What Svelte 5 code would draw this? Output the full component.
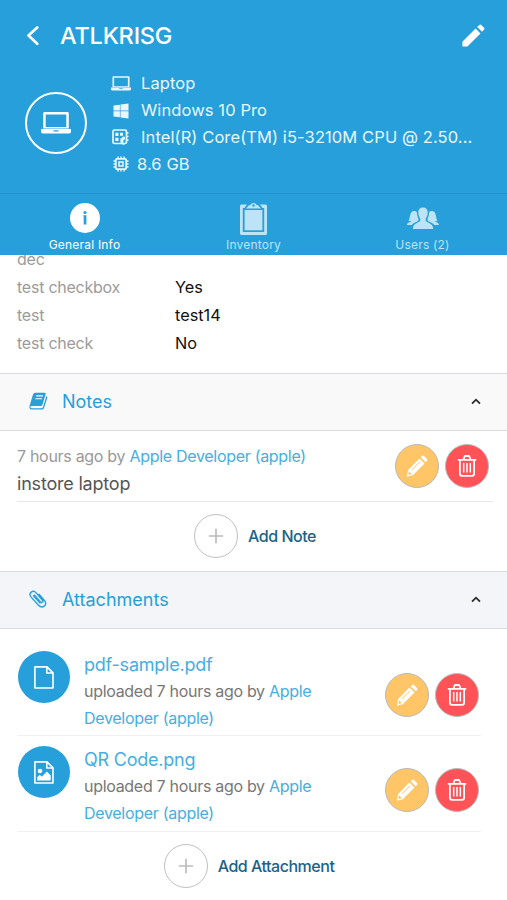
<script lang="ts">
  type Attachment = { name: string; kind: 'file' | 'image' };

  const specs = [
    { icon: 'laptop', text: 'Laptop' },
    { icon: 'windows', text: 'Windows 10 Pro' },
    { icon: 'board', text: 'Intel(R) Core(TM) i5-3210M CPU @ 2.50...' },
    { icon: 'chip', text: '8.6 GB' }
  ];

  const tabs = [
    { id: 'info', label: 'General Info' },
    { id: 'inventory', label: 'Inventory' },
    { id: 'users', label: 'Users (2)' }
  ];

  const fields = [
    { label: 'dec', value: '' },
    { label: 'test checkbox', value: 'Yes' },
    { label: 'test', value: 'test14' },
    { label: 'test check', value: 'No' }
  ];

  const attachments: Attachment[] = [
    { name: 'pdf-sample.pdf', kind: 'file' },
    { name: 'QR Code.png', kind: 'image' }
  ];

  let activeTab = $state('info');
  let notesOpen = $state(true);
  let attachmentsOpen = $state(true);
</script>

{#snippet laptop()}
  <svg class="laptop" viewBox="0 0 30 22" fill="currentColor">
    <path fill-rule="evenodd" d="M3.600 0h22.800q1.400 0 1.400 1.400V16.500H2.200V1.400Q2.200 0 3.600 0zM4.700 2.500v12.500h20.600V2.500z" />
    <path fill-rule="evenodd" d="M0 17h30v2.800q0 1.800-1.800 1.800H1.800Q0 21.600 0 19.800zM12.500 18.200v1.200h5v-1.200z" />
  </svg>
{/snippet}

{#snippet rowActions()}
  <div class="actions">
    <button class="round edit" aria-label="Edit">
      <svg width="22" height="22" viewBox="0 0 22 22">
        <path fill="#fff" d="M14.600 2.300 16 .9q1-.8 2 0l3 3q.9 1 0 2l-1.400 1.400zM13.400 3.400l5.100 5.100L6.800 20.200l-6 1.500 1.300-6.600z" />
        <path d="M5.800 14.900l8-8" stroke="#ffc566" stroke-width="1" />
        <path fill="#ffc566" d="M3 16.300l2.800 2.800-2.600.8-.9-.9z" />
      </svg>
    </button>
    <button class="round remove" aria-label="Delete">
      <svg width="20" height="22" viewBox="0 0 20 22" fill="none" stroke="#fff">
        <path stroke-width="1.800" d="M.8 4.900h18.400M6.500 4.500l1-2.700q.3-.8 1.100-.8h2.800q.8 0 1.100.8l1 2.700M2.900 5v13.600q0 2.300 2.100 2.300h10q2.100 0 2.100-2.300V5" />
        <path stroke-width="1.500" d="M6.700 8v9.500M10 8v9.500M13.300 8v9.500" />
      </svg>
    </button>
  </div>
{/snippet}

{#snippet addButton(label: string)}
  <button class="add">
    <span class="plus">
      <svg width="16" height="16" viewBox="0 0 16 16" stroke="#bcbcbc" stroke-width="1.700">
        <path d="M8 .8v14.400M.8 8h14.400" />
      </svg>
    </span>
    <span>{label}</span>
  </button>
{/snippet}

{#snippet chevron(open: boolean)}
  <svg class="chevron" class:closed={!open} width="10" height="7" viewBox="0 0 10 7" fill="none" stroke="#2b2b2b" stroke-width="1.800">
    <path d="M1 5.700l4-4 4 4" />
  </svg>
{/snippet}

<div class="screen">
  <header>
    <div class="title-bar">
      <button class="plain" aria-label="Back">
        <svg width="13" height="20" viewBox="0 0 13 20" fill="none" stroke="#fff" stroke-width="2.700" stroke-linecap="round" stroke-linejoin="round">
          <path d="M11.200 1.500L2.500 9.500l8.700 8.200" />
        </svg>
      </button>
      <h1>ATLKRISG</h1>
      <button class="plain" aria-label="Edit asset">
        <svg width="23" height="23" viewBox="0 0 23 23" fill="#fff">
          <path d="M.4 22.600v-4.400q0-.5.400-.9L13.600 4.500l4.900 4.900L5.700 22.200q-.4.400-.9.400zM15.200 3l2-2q1-1 2.100 0l2.700 2.700q1 1 0 2.100l-2 2z" />
        </svg>
      </button>
    </div>

    <div class="summary">
      <div class="avatar">{@render laptop()}</div>
      <ul class="specs">
        {#each specs as spec}
          <li class={spec.icon}>
            <span class="spec-icon">
              {#if spec.icon === 'laptop'}
                {@render laptop()}
              {:else if spec.icon === 'windows'}
                <svg width="16" height="16" viewBox="0 0 16 16" fill="currentColor">
                  <path d="M.5 2.600 6.900 1.700v5.900H.5zM7.500 1.600 15.500.4v7.200h-8zM.5 8.300h6.400v6l-6.400-.9zM7.500 8.300h8v7.300l-8-1.200z" />
                </svg>
              {:else if spec.icon === 'board'}
                <svg width="17" height="16" viewBox="0 0 17 16" fill="none" stroke="currentColor">
                  <rect x="1" y="1" width="13.500" height="13.500" rx="1.500" stroke-width="1.700" />
                  <path stroke-width="1.500" d="M14.500 4h2M14.500 7.500h2M14.500 11h2M11.500 14v2" />
                  <path fill="currentColor" stroke="none" d="M3.300 3.700h3.200v3.200H3.300zM8 3.700h3v3H8zM3.300 8.700h3.200v3.200H3.300zM8.400 9.200h1.800V7.800H13v2.700h-1.500v3.200H8.400z" />
                </svg>
              {:else}
                <svg width="16" height="16" viewBox="0 0 16 16" fill="none" stroke="currentColor">
                  <rect x="2.800" y="2.800" width="10.400" height="10.400" rx="1.200" stroke-width="1.800" />
                  <rect x="6" y="6" width="4" height="4" stroke-width="1.500" />
                  <path stroke-width="1.500" d="M5 .5v2M8 .5v2M11 .5v2M5 13.500v2M8 13.500v2M11 13.500v2M.5 5h2M.5 8h2M.5 11h2M13.500 5h2M13.500 8h2M13.500 11h2" />
                </svg>
              {/if}
            </span>
            <span class="spec-text">{spec.text}</span>
          </li>
        {/each}
      </ul>
    </div>

    <nav>
      {#each tabs as tab}
        <button class="tab" class:active={activeTab === tab.id} onclick={() => (activeTab = tab.id)}>
          <span class="tab-icon">
            {#if tab.id === 'info'}
              <svg width="30" height="30" viewBox="0 0 30 30">
                <circle cx="15" cy="15" r="15" fill="currentColor" />
                <circle cx="15" cy="9.500" r="1.600" fill="#269fdb" />
                <path d="M13.300 12.200h3.100V21.500h-2.700v-8h-.4z" fill="#269fdb" />
              </svg>
            {:else if tab.id === 'inventory'}
              <svg width="27" height="32" viewBox="0 0 27 32" fill="currentColor">
                <path d="M1.500 1.500H7L4.500 5H2.800v24h21.400V5h-1.700L20 1.500h5.500q1.500 0 1.500 1.500v27.500q0 1.500-1.500 1.500h-24Q0 32 0 30.500V3q0-1.500 1.500-1.500z" />
                <path fill-rule="evenodd" d="M6 5.600 8.800 2.500q.6-.7 1.500-.7h.4Q11.300 0 13.500 0t2.800 1.800h.4q.9 0 1.500.7L21 5.600zM13.500 1.300a1.200 1.200 0 1 0 0 2.400 1.200 1.200 0 1 0 0-2.400z" />
                <path d="M4.600 7h17.800v20.300H4.600z" />
              </svg>
            {:else}
              <svg width="32" height="23" viewBox="0 0 32 23" fill="currentColor">
                <path d="M16 .5c3.200 0 4.800 2 4.700 5 0 2.700-.8 4.200-1.700 5.500-.5.800-.4 2.500.2 3.200 1.300 1.500 6.300 2.300 6.800 6.200l.1 1.600H5.900l.1-1.600c.5-3.900 5.500-4.700 6.800-6.200.6-.7.7-2.400.2-3.200-.9-1.300-1.700-2.800-1.700-5.500-.1-3 1.500-5 4.700-5z" />
                <path d="M7 4c1.200 0 2.300.4 2.900 1.200.2 3.200.8 5 1.600 6.600q.4 1.500-.8 2.400l-3.600 1.900c-1 .5-1.700 1-2.200 1.900H0c0-3 3.400-2.600 4.300-3.600C3.200 14.400 2 14 1.500 13.500 3.500 12 2.200 4 7 4z" />
                <path d="M25 4c-1.200 0-2.300.4-2.900 1.200-.2 3.200-.8 5-1.600 6.600q-.4 1.500.8 2.400l3.600 1.900c1 .5 1.700 1 2.200 1.900H32c0-3-3.400-2.600-4.300-3.600 1.100 0 2.300-.4 2.800-.9C28.500 12 29.800 4 25 4z" />
              </svg>
            {/if}
          </span>
          <span class="tab-label">{tab.label}</span>
        </button>
      {/each}
    </nav>
  </header>

  <main>
    <dl class="fields">
      {#each fields as field}
        <div class="field">
          <dt>{field.label}</dt>
          <dd>{field.value}</dd>
        </div>
      {/each}
    </dl>

    <button class="section-head notes-head" onclick={() => (notesOpen = !notesOpen)}>
      <svg width="20" height="18" viewBox="0 0 20 18">
        <path fill="#269fdb" d="M6.300.7h9.200q1.500 0 1.100 1.500l-3.200 10.500q-.4 1.300-1.700 1.300H2.400q-1.100 0-1.100 1.100t1.300 1.100h9.900q1.100 0 1.500-1.200l3.400-11q1.200.6.800 1.900l-3.200 10.200q-.5 1.500-2 1.500H2.500Q-.2 17.600.5 14L4 2.500Q4.500.7 6.300.7z" />
        <path d="M7.200 3.900h6.800M6.300 6.800h6.800" stroke="#fff" stroke-width="1.100" />
      </svg>
      <span class="section-title">Notes</span>
      {@render chevron(notesOpen)}
    </button>
    {#if notesOpen}
      <section class="notes">
        <article class="note">
          <div class="note-body">
            <p class="meta">7 hours ago by <a href="#apple">Apple Developer (apple)</a></p>
            <p class="note-text">instore laptop</p>
          </div>
          {@render rowActions()}
        </article>
        {@render addButton('Add Note')}
      </section>
    {/if}

    <button class="section-head attachments-head" onclick={() => (attachmentsOpen = !attachmentsOpen)}>
      <svg width="20" height="18" viewBox="0 0 20 18" fill="none" stroke="#269fdb" stroke-width="1.400" stroke-linecap="round">
        <path d="M5.500 5.200l6 6.700q1.100 1 2 .2t0-1.900L7.300 3.100Q4.800.2 2.300 2.100T2 6.900l7.200 8q3.200 3.300 6 1.200t.4-5.500L10 4.300" />
        <path d="M4.500 5.800 11 13.100" />
      </svg>
      <span class="section-title">Attachments</span>
      {@render chevron(attachmentsOpen)}
    </button>
    {#if attachmentsOpen}
      <section class="attachments">
        {#each attachments as item}
          <article class="attachment">
            <div class="file-icon">
              <svg width="20" height="23" viewBox="0 0 20 23" fill="none" stroke="#fff" stroke-width="1.600" stroke-linejoin="round">
                <path d="M.9.900H13l6 6V22H.9zM12.800.900V7H19" />
                {#if item.kind === 'image'}
                  <path fill="#fff" stroke="none" d="M3.200 19.500v-3.200l2.600-2.500 2 1.900 5-5.200 3.900 4v5z" />
                  <circle cx="6" cy="10" r="2.300" fill="#fff" stroke="none" />
                {/if}
              </svg>
            </div>
            <div class="file-body">
              <a class="file-name" href="#file">{item.name}</a>
              <p class="meta">uploaded 7 hours ago by <a href="#apple">Apple Developer (apple)</a></p>
            </div>
            {@render rowActions()}
          </article>
        {/each}
        {@render addButton('Add Attachment')}
      </section>
    {/if}
  </main>
</div>

<style>
  :global(body) {
    background: #fff;
  }
  .screen {
    display: flex;
    flex-direction: column;
    width: 507px;
    height: 900px;
    overflow: hidden;
    font-family: Inter, 'Liberation Sans', sans-serif;
    font-size: 16px;
    color: #111;
  }
  .screen * {
    box-sizing: border-box;
  }
  button {
    padding: 0;
    border: 0;
    background: none;
    font: inherit;
    color: inherit;
    cursor: pointer;
  }
  a {
    color: #45aee2;
    text-decoration: none;
  }
  p,
  ul,
  dl,
  dd,
  h1 {
    margin: 0;
    padding: 0;
  }
  svg {
    display: block;
    flex: none;
  }
  header {
    flex: none;
    height: 255px;
    background: #269fdb;
    color: #fff;
  }
  .title-bar {
    display: flex;
    align-items: center;
    height: 71px;
    padding: 0 22px 0 26px;
  }
  h1 {
    flex: 1;
    margin-left: 21px;
    font-size: 23.5px;
    font-weight: 500;
    line-height: 30px;
    letter-spacing: -0.2px;
  }
  .summary {
    display: flex;
    height: 123px;
    padding-left: 25px;
  }
  .avatar {
    display: flex;
    align-items: center;
    justify-content: center;
    width: 62px;
    height: 62px;
    margin: 21px 24px 0 0;
    border: 2px solid #fff;
    border-radius: 50%;
  }
  .laptop {
    width: 30px;
    height: 22px;
  }
  .specs {
    list-style: none;
    margin-top: -1px;
    font-size: 16.5px;
    letter-spacing: 0.1px;
    color: #e9f7fd;
  }
  .specs li {
    display: flex;
    align-items: center;
    height: 26.8px;
  }
  .spec-icon {
    display: flex;
    justify-content: center;
    width: 20px;
    margin-right: 10px;
  }
  .spec-icon .laptop {
    width: 20px;
    height: 15px;
  }
  .windows .spec-icon,
  .board .spec-icon {
    padding-right: 1px;
  }
  .windows svg {
    margin-top: 2px;
  }
  .chip .spec-icon {
    margin-right: 6px;
  }
  nav {
    display: grid;
    grid-template-columns: repeat(3, 1fr);
    height: 61px;
    box-shadow: 0 -1px #2092cd;
  }
  .tab {
    display: flex;
    flex-direction: column;
    align-items: center;
    color: #bde4f6;
  }
  .tab.active {
    color: #fff;
  }
  .tab-icon {
    display: flex;
    align-items: center;
    height: 33px;
    margin-top: 8px;
  }
  .tab.active .tab-icon {
    align-items: flex-start;
    padding-top: 1px;
  }
  .tab-label {
    font-size: 12px;
    line-height: 19px;
    letter-spacing: 0.2px;
  }
  main {
    flex: 1;
    min-height: 0;
    overflow: hidden;
  }
  .fields {
    margin-top: -10px;
    height: 128px;
  }
  .field {
    display: flex;
    height: 28px;
    padding-left: 17px;
    line-height: 28px;
  }
  dt {
    width: 158px;
    letter-spacing: -0.24px;
    color: #9b9b9b;
  }
  dd {
    font-size: 16.3px;
  }
  .section-head {
    display: flex;
    align-items: center;
    width: 100%;
    height: 58px;
    padding: 0 26px 2px 29px;
    border-top: 1px solid #d8dadd;
    border-bottom: 1px solid #d8dadd;
    background: #f9f9f9;
    text-align: left;
  }
  .attachments-head {
    background: #f3f5f9;
  }
  .section-title {
    flex: 1;
    margin-left: 13px;
    font-size: 18px;
    color: #269fdb;
  }
  .chevron.closed {
    transform: rotate(180deg);
  }
  .notes {
    height: 140px;
    padding: 0 14px 0 17px;
  }
  .note {
    display: flex;
    justify-content: space-between;
    height: 71px;
    padding: 12px 4px 0 0;
    border-bottom: 1px solid #e6e6e6;
  }
  .meta {
    line-height: 27px;
    letter-spacing: -0.3px;
    color: #999;
  }
  .note-text {
    font-size: 18px;
    line-height: 27px;
    letter-spacing: -0.2px;
    color: #555;
  }
  .actions {
    display: flex;
    gap: 6px;
  }
  .note .actions {
    margin-top: 1px;
  }
  .round {
    display: flex;
    align-items: center;
    justify-content: center;
    width: 44px;
    height: 44px;
    border: 1px solid #b9b9b9;
    border-radius: 50%;
  }
  .edit {
    background: #ffc566;
  }
  .remove {
    background: #ff5358;
  }
  .add {
    display: flex;
    align-items: center;
    gap: 10px;
    margin: 12px auto 0;
    font-weight: 500;
    letter-spacing: -0.48px;
    color: #1b6288;
  }
  .plus {
    display: flex;
    align-items: center;
    justify-content: center;
    width: 44px;
    height: 44px;
    border: 1.5px solid #c0c0c0;
    border-radius: 50%;
  }
  .attachments {
    padding: 12px 26px 0 17px;
  }
  .attachment {
    display: flex;
    height: 95.4px;
    padding-top: 10px;
    border-bottom: 1px solid #f0f0f0;
  }
  .file-icon {
    display: flex;
    align-items: center;
    justify-content: center;
    flex: none;
    width: 52px;
    height: 52px;
    margin-left: 1px;
    border-radius: 50%;
    background: #269fdb;
  }
  .file-body {
    width: 250px;
    margin-left: 14px;
  }
  .file-name {
    display: block;
    font-size: 18px;
    line-height: 27px;
    letter-spacing: -0.22px;
  }
  .attachment .meta {
    color: #777;
  }
  .attachment .actions {
    margin: 22px 2px 0 auto;
  }
</style>
